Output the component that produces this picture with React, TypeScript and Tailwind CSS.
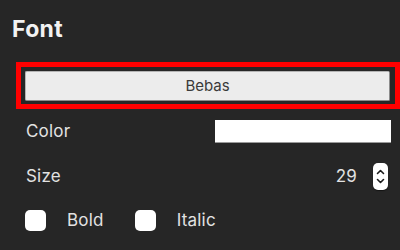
import { useState } from "react";

const Stepper = () => (
  <div className="w-[15px] h-[27px] rounded-[5px] bg-white flex items-center justify-center shadow-[0_1px_1px_rgba(0,0,0,0.5)]">
    <svg width="9" height="19" viewBox="0 0 9 19" fill="none" stroke="#1a1a1a" strokeWidth="1.6" strokeLinecap="round" strokeLinejoin="round">
      <path d="M1.5 6.5 L4.5 3.5 L7.5 6.5" />
      <path d="M1.5 12.5 L4.5 15.5 L7.5 12.5" />
    </svg>
  </div>
);

const Check = ({ label, checked, onToggle }: { label: string; checked: boolean; onToggle: () => void }) => (
  <label className="flex items-center cursor-pointer" onClick={onToggle}>
    <span className="w-[21px] h-[21px] rounded-[5px] bg-white block" />
    <span className="ml-[21px] text-[17px] tracking-[0.2px] text-[#e2e2e2] leading-[21px]">{label}</span>
  </label>
);

export default function App() {
  const [bold, setBold] = useState(false);
  const [italic, setItalic] = useState(false);

  return (
    <div
      className="w-[400px] h-[250px] bg-[#262626] overflow-hidden flex flex-col"
      style={{ fontFamily: "Inter, 'Noto Sans', 'Liberation Sans', sans-serif" }}
    >
      <div className="pl-[12px] pt-[15px] text-[23px] leading-[28px] font-bold tracking-[0.3px] text-[#f2f2f2]">Font</div>

      {/* selected font picker */}
      <div className="ml-[16px] mt-[19px] border-[5px] border-[#ff0000] pl-[4px] pr-[5px] pt-[4px] pb-[3px]">
        <button className="w-full h-[30px] bg-[#ececec] border border-[#b4b4b4] border-b-[#8c8c8c] border-r-[#8c8c8c] rounded-[2px] text-[15px] text-[#3a3a3a]">
          Bebas
        </button>
      </div>

      <div className="flex items-center justify-between pl-[26px] pr-[9px] mt-[11px] h-[23px]">
        <span className="text-[17px] tracking-[0.2px] text-[#e2e2e2]">Color</span>
        <div className="w-[176px] h-[23px] bg-white border-b border-[#9a9a9a]" />
      </div>

      <div className="flex items-center justify-between pl-[26px] pr-[12px] mt-[20px] h-[27px]">
        <span className="text-[17px] tracking-[0.2px] text-[#e2e2e2]">Size</span>
        <div className="flex items-center gap-[16px]">
          <span className="text-[17px] tracking-[0.2px] text-[#e2e2e2]">29</span>
          <Stepper />
        </div>
      </div>

      <div className="flex items-center gap-[31px] pl-[25px] mt-[20px]">
        <Check label="Bold" checked={bold} onToggle={() => setBold(!bold)} />
        <Check label="Italic" checked={italic} onToggle={() => setItalic(!italic)} />
      </div>
    </div>
  );
}
